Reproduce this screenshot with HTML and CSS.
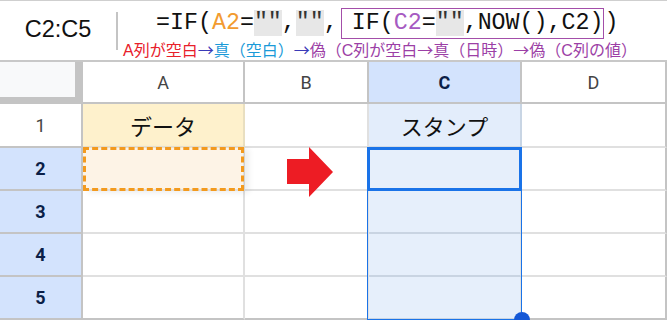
FILE: index.html
```html
<!DOCTYPE html>
<html lang="ja">
<head>
    <meta charset="UTF-8">
    <title>タイムスタンプ</title>
    <link rel="stylesheet" href="styles.css">
</head>
<body>
    <div class="frame">
        <div class="formula-bar">
            <div class="name-box">C2:C5</div>
            <div class="divider"></div>
            <div class="formula">
                <div class="formula-line"><span>=IF(</span><span class="ref-a">A2</span><span>=</span><span class="quote">""</span><span>,</span><span class="quote">""</span><span>,</span><span class="inner">IF(<span class="ref-c">C2</span>=<span class="quote">""</span>,NOW(),C2)</span><span>)</span></div>
                <div class="note"><span class="red">A列が空白</span><span class="indigo arr">→</span><span class="sky">真（空白）</span><span class="indigo arr">→</span><span class="purple">偽（C列が空白<span class="arr">→</span>真（日時）<span class="arr">→</span>偽（C列の値）</span></div>
            </div>
        </div>

        <div class="sheet">
            <div class="corner"></div>
            <div class="col-head">A</div>
            <div class="col-head">B</div>
            <div class="col-head selected">C</div>
            <div class="col-head last">D</div>

            <div class="row-head">1</div>
            <div class="cell label-a">データ</div>
            <div class="cell"></div>
            <div class="cell label-c">スタンプ</div>
            <div class="cell last"></div>

            <div class="row-head selected">2</div>
            <div class="cell source"></div>
            <div class="cell"></div>
            <div class="cell in-range"></div>
            <div class="cell last"></div>

            <div class="row-head selected">3</div>
            <div class="cell"></div>
            <div class="cell"></div>
            <div class="cell in-range"></div>
            <div class="cell last"></div>

            <div class="row-head selected">4</div>
            <div class="cell"></div>
            <div class="cell"></div>
            <div class="cell in-range"></div>
            <div class="cell last"></div>

            <div class="row-head selected bottom">5</div>
            <div class="cell bottom"></div>
            <div class="cell bottom"></div>
            <div class="cell in-range bottom"></div>
            <div class="cell last bottom"></div>

            <!-- overlays -->
            <div class="copy-mark"></div>
            <svg class="arrow" width="46" height="50" viewBox="0 0 46 50">
                <path d="M0 12 H22 V0 L46 25 L22 50 V37 H0 Z" fill="#ed1c24"/>
            </svg>
            <div class="range"></div>
            <div class="active"></div>
            <div class="handle"></div>
        </div>
    </div>
</body>
</html>
```

FILE: styles.css
```css
* {
    margin: 0;
    padding: 0;
    box-sizing: border-box;
}

body {
    background: #fff;
    font-family: Roboto, 'Liberation Sans', 'Noto Sans CJK JP', sans-serif;
    color: #222;
}

.frame {
    width: 667px;
}

/* formula bar */
.formula-bar {
    display: flex;
    height: 62px;
    border-top: 1px solid #cfcfcf;
    border-bottom: 2px solid #c8c8c8;
}

.name-box {
    width: 116px;
    display: flex;
    align-items: center;
    justify-content: center;
    padding-bottom: 2px;
    font-family: 'Liberation Sans', Arial, sans-serif;
    font-size: 23.5px;
    color: #111;
}

.divider {
    width: 2px;
    height: 38px;
    margin-top: 11px;
    background: #c4c4c4;
}

.formula {
    display: flex;
    flex-direction: column;
    padding-left: 5px;
    padding-top: 6px;
}

.formula-line {
    padding-left: 33px;
    height: 32px;
    display: flex;
    align-items: center;
    font-family: 'Liberation Mono', monospace;
    font-size: 23.3px;
    color: #111;
    white-space: pre;
}

.ref-a {
    color: #f29b30;
}

.ref-c {
    color: #a65ac2;
}

.quote {
    background: #e7e7e7;
    color: #333;
}

.inner {
    margin-left: 3px;
    padding-left: 10px;
    height: 31px;
    display: flex;
    align-items: center;
    border: 1.5px solid #a34ea9;
}

.note {
    font-family: 'Liberation Sans', 'Noto Sans CJK JP', sans-serif;
    font-size: 16px;
    line-height: 18px;
    margin-top: 1px;
    white-space: nowrap;
}

.arr {
    font-family: 'Noto Sans CJK JP', sans-serif;
}

.red { color: #e8202a; }
.indigo { color: #3a3ab8; }
.sky { color: #1a9ad8; }
.purple { color: #9c3fa6; }

/* grid */
.sheet {
    position: relative;
    display: grid;
    grid-template-columns: 83px 162px 124px 153px 145px;
    grid-template-rows: 42px 44px 43px 43px 43px 43px;
}

.corner {
    background: #f8f9fa;
    border-right: 8px solid #c4c4c4;
    border-bottom: 7px solid #c4c4c4;
}

.col-head,
.row-head,
.cell {
    display: flex;
    align-items: center;
    justify-content: center;
    border-right: 2px solid #e0e0e0;
    border-bottom: 2px solid #e0e0e0;
}

.col-head,
.row-head {
    font-size: 18px;
    color: #444;
    border-color: #c4c4c4;
}

.col-head.selected,
.row-head.selected {
    background: #d3e3fd;
    color: #0b1f48;
    font-weight: 700;
}

.last {
    border-right-color: #c4c4c4;
}

.bottom {
    border-bottom-color: #c4c4c4;
}

.label-a {
    background: #fef1cc;
    border-right-color: #e9dfc0;
    border-bottom-color: #e6e0cf;
    font-family: 'Noto Sans CJK JP', sans-serif;
    font-size: 22px;
    color: #111;
}

.label-c {
    background: #e3edfb;
    border-right-color: #c8d5e4;
    border-bottom-color: #d3dbe5;
    font-family: 'Noto Sans CJK JP', sans-serif;
    font-size: 22px;
    color: #111;
}

.source {
    background: #fdf3e6;
}

.in-range {
    background: #e6effb;
    border-bottom-color: #c9d4e2;
}

/* overlays */
.copy-mark {
    position: absolute;
    left: 83px;
    top: 85px;
    width: 161px;
    height: 44px;
    border: 3px dashed #f39a1e;
    box-shadow: 5px 2px 6px rgba(0, 0, 0, 0.07);
}

.arrow {
    position: absolute;
    left: 287px;
    top: 85px;
}

.range {
    position: absolute;
    left: 367px;
    top: 85px;
    width: 155px;
    height: 173px;
    border: 1.5px solid #1a73e8;
}

.active {
    position: absolute;
    left: 367px;
    top: 85px;
    width: 155px;
    height: 44px;
    border: 3px solid #1a73e8;
}

.handle {
    position: absolute;
    left: 514px;
    top: 250px;
    width: 16px;
    height: 16px;
    border-radius: 50%;
    background: #1558d6;
}
```
